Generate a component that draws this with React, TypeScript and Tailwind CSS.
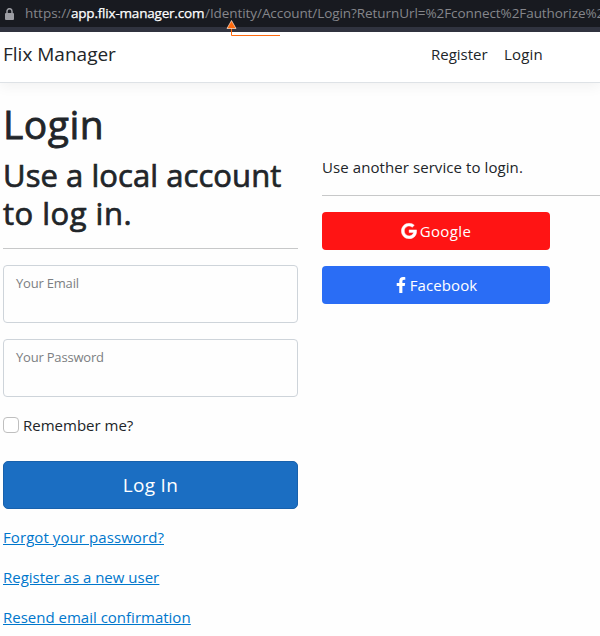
import { FaFacebookF } from "react-icons/fa";

function GoogleIcon() {
  return (
    <svg viewBox="0 0 488 512" className="h-4 w-4 shrink-0" fill="currentColor" stroke="currentColor" strokeWidth="14">
      <path d="M488 261.8C488 403.3 391.1 504 248 504 110.8 504 0 393.2 0 256S110.8 8 248 8c66.8 0 123 24.5 166.3 64.9l-67.5 64.9C258.5 52.6 94.3 116.6 94.3 256c0 86.5 69.1 156.6 153.7 156.6 98.2 0 135-70.4 140.8-106.9H248v-85.3h236.1c2.3 12.7 3.9 24.9 3.9 41.4z" />
    </svg>
  );
}

function AddressBar() {
  return (
    <div className="relative h-8 border-b-[5px] border-[#30333f] bg-[#181a20]">
      <div className="flex h-[27px] items-center overflow-hidden whitespace-nowrap text-[13.5px] leading-[27px] text-[#85868b]">
        <svg viewBox="0 0 9 12" className="ml-[5px] mr-[11px] h-3 w-[9px] shrink-0">
          <path d="M2 6V3.2a2.5 2.5 0 0 1 5 0V6" fill="none" stroke="#9c9da3" strokeWidth="1.5" />
          <rect y="5" width="9" height="7" rx="1" fill="#9c9da3" />
        </svg>
        <span className="w-[46px] shrink-0">https://</span>
        <span className="w-[134px] shrink-0 tracking-[-0.2px] text-white [-webkit-text-stroke:0.25px_#fff]">app.flix-manager.com</span>
        <span className="shrink-0 tracking-[-0.07px]">/Identity/Account/Login?ReturnUrl=%2Fconnect%2Fauthorize%2</span>
      </div>
      <svg viewBox="0 0 56 18" className="absolute left-[226px] top-[19px] h-[18px] w-14">
        <path d="M5.5 8v8.5H54" fill="none" stroke="#ff6a0d" />
        <path d="M5.5 1.5 1 9.5h9z" fill="#ff6a0d" stroke="#ffe6d5" strokeWidth=".7" />
      </svg>
    </div>
  );
}

function Field({ label, type }: { label: string; type: string }) {
  return (
    <label className="relative mb-4 block h-[58px] rounded border border-[#ced4da]">
      <span className="absolute left-3 top-[7px] text-[13px] leading-[21px] tracking-[-0.2px] text-[#7c7f82]">{label}</span>
      <input type={type} className="h-full w-full bg-transparent px-3 pt-5 outline-none" />
    </label>
  );
}

export default function App() {
  return (
    <div className="h-[636px] w-[600px] overflow-hidden bg-[#fefefe] font-['Open_Sans','Noto_Sans',sans-serif] text-[15px] leading-6 text-[#212529]">
      <AddressBar />
      <nav className="flex h-[51px] items-center border-b border-[#dee2e6] bg-white pb-[6px] pl-[3px] shadow-[0_4px_12px_rgba(0,0,0,0.05)]">
        <a className="flex-1 text-[19px]">Flix Manager</a>
        <a className="w-[73px]">Register</a>
        <a className="w-24 tracking-[0.2px]">Login</a>
      </nav>
      <main className="pl-[3px] pt-[17px]">
        <h1 className="mb-2 text-[39px] leading-[48px] tracking-[0.5px] [-webkit-text-stroke:0.8px_#212529]">Login</h1>
        <div className="flex gap-6">
          <section className="w-[295px] shrink-0">
            <h2 className="whitespace-nowrap text-[31px] leading-[38px] tracking-[0.06px] [-webkit-text-stroke:0.7px_#212529]">Use a local account<br /><span className="tracking-[0.5px]">to log in.</span></h2>
            <hr className="mb-4 mt-4 border-[#c7c8c9]" />
            <Field label="Your Email" type="email" />
            <Field label="Your Password" type="password" />
            <label className="flex items-center gap-1">
              <input type="checkbox" className="h-4 w-4 appearance-none rounded-[4px] border border-[#bfbfbf] bg-white" />
              <span>Remember me?</span>
            </label>
            <button className="mt-6 h-12 w-full rounded-[5px] border border-[#1861ac] bg-[#1b6ec2] text-[19px] tracking-[0.3px] text-white">Log In</button>
            <div className="mt-4 flex flex-col items-start gap-4 text-[#0077cc] underline">
              <a className="tracking-[0.08px]">Forgot your password?</a>
              <a>Register as a new user</a>
              <a>Resend email confirmation</a>
            </div>
          </section>
          <section className="-mt-px flex-1">
            <p className="tracking-[0.08px]">Use another service to login.</p>
            <hr className="my-4 border-[#c7c8c9]" />
            <button className="mb-4 flex h-[38px] w-[228px] items-center justify-center gap-[3px] rounded bg-[#ff1414] text-white">
              <GoogleIcon />
              <span className="tracking-[0.4px]">Google</span>
            </button>
            <button className="flex h-[38px] w-[228px] items-center justify-center gap-1 rounded bg-[#2a6df5] pl-px text-white">
              <FaFacebookF className="h-4 w-[10px]" />
              <span className="tracking-[0.1px]">Facebook</span>
            </button>
          </section>
        </div>
      </main>
    </div>
  );
}
